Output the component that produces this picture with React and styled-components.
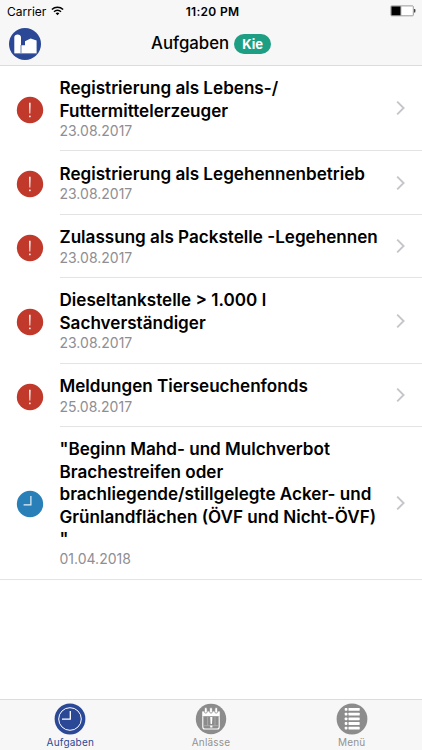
import styled, { createGlobalStyle } from "styled-components";

const tasks = [
  {
    title: ["Registrierung als Lebens-/", "Futtermittelerzeuger"],
    date: "23.08.2017",
    status: "overdue",
  },
  {
    title: ["Registrierung als Legehennenbetrieb"],
    date: "23.08.2017",
    status: "overdue",
  },
  {
    title: ["Zulassung als Packstelle -Legehennen"],
    date: "23.08.2017",
    status: "overdue",
  },
  {
    title: ["Dieseltankstelle > 1.000 l", "Sachverständiger"],
    date: "23.08.2017",
    status: "overdue",
  },
  {
    title: ["Meldungen Tierseuchenfonds"],
    date: "25.08.2017",
    status: "overdue",
  },
  {
    title: [
      '"Beginn Mahd- und Mulchverbot',
      "Brachestreifen oder",
      "brachliegende/stillgelegte Acker- und",
      "Grünlandflächen (ÖVF und Nicht-ÖVF)",
      '"',
    ],
    date: "01.04.2018",
    status: "upcoming",
  },
];

const tabs = [
  { label: "Aufgaben", Icon: ClockIcon, active: true },
  { label: "Anlässe", Icon: CalendarIcon },
  { label: "Menü", Icon: ListIcon },
];

const App = () => {
  return (
    <Screen>
      <GlobalStyle />
      <Header>
        <StatusBar>
          <Carrier>
            Carrier
            <WifiIcon />
          </Carrier>
          <Time>11:20 PM</Time>
          <Power>
            <BatteryIcon />
          </Power>
        </StatusBar>
        <NavBar>
          <FarmLogo />
          <NavTitle>Aufgaben</NavTitle>
          <Badge>Kie</Badge>
        </NavBar>
      </Header>

      <TaskList>
        {tasks.map((task) => (
          <TaskRow key={task.title[0]}>
            <StatusIcon status={task.status} />
            <TaskBody>
              <TaskText>
                {task.title.map((line) => (
                  <TaskTitle key={line}>{line}</TaskTitle>
                ))}
                <TaskDate>{task.date}</TaskDate>
              </TaskText>
              <Chevron />
            </TaskBody>
          </TaskRow>
        ))}
      </TaskList>

      <TabBar>
        {tabs.map(({ label, Icon, active }) => (
          <Tab key={label} $active={active}>
            <Icon />
            <TabLabel>{label}</TabLabel>
          </Tab>
        ))}
      </TabBar>
    </Screen>
  );
};
export default App;

function WifiIcon() {
  return (
    <svg width="13" height="10" viewBox="0 0 13 10" fill="none" stroke="#000">
      <path d="M0.9 3.5C4 0.5 9 0.5 12.1 3.5" strokeWidth="1.6" />
      <path d="M3 5.7C5 3.9 8 3.9 10 5.7" strokeWidth="1.5" />
      <path d="M4.6 7.3Q6.5 5.9 8.4 7.3L6.5 9.3Z" fill="#000" stroke="none" />
    </svg>
  );
}

function BatteryIcon() {
  return (
    <svg width="26" height="12" viewBox="0 0 26 12">
      <rect
        x="0.9"
        y="0.9"
        width="22.4"
        height="9.9"
        rx="0.8"
        fill="#fff"
        stroke="#999"
      />
      <rect x="1.4" y="1.4" width="9.3" height="8.9" fill="#000" />
      <rect x="10.7" y="1.4" width="0.6" height="8.9" fill="#888" />
      <path d="M24 4h1.2q0.6 1.8 0 3.6H24z" fill="#444" />
    </svg>
  );
}

function FarmLogo() {
  return (
    <svg width="32" height="32" viewBox="0 0 32 32">
      <circle cx="16" cy="16" r="16" fill="#2a4896" />
      <path
        d="M5.3 25.3V9.2Q5.5 6.4 8.6 6.4T12 9.2V17.3H16V13.3L21.6 10.4L27.6 12.6V25.3Z"
        fill="#fff"
      />
      <path d="M12 17v8.3" stroke="#2a4896" strokeWidth="0.7" />
      <path d="M5.3 25.6H27.6" stroke="#8fa0cc" strokeWidth="0.6" />
    </svg>
  );
}

function StatusIcon({ status }) {
  const overdue = status === "overdue";
  return (
    <StatusSvg viewBox="0 0 28 28">
      <circle cx="14" cy="14" r="13.2" fill={overdue ? "#c0392b" : "#2980b9"} />
      {overdue ? (
        <g fill="#fff">
          <path d="M13.1 6.8h1.5l-0.3 10.6h-0.9z" />
          <rect x="13.1" y="19.6" width="1.5" height="1.6" />
        </g>
      ) : (
        <path d="M14.9 6V14.8H7.6" fill="none" stroke="#e4f0f8" strokeWidth="1.2" />
      )}
    </StatusSvg>
  );
}

function Chevron() {
  return (
    <ChevronSvg viewBox="0 0 10 16">
      <path
        d="M1.2 1.6L7.6 8L1.2 14.4"
        fill="none"
        stroke="#c5c5ca"
        strokeWidth="1.9"
      />
    </ChevronSvg>
  );
}

function ClockIcon() {
  return (
    <svg width="32" height="32" viewBox="0 0 32 32">
      <circle cx="16" cy="16" r="15.4" fill="#2a4896" />
      <circle cx="16" cy="16" r="11.3" fill="none" stroke="#fff" strokeWidth="1" />
      <path d="M16.3 8V16.2H8" fill="none" stroke="#fff" strokeWidth="1.3" />
    </svg>
  );
}

function CalendarIcon() {
  return (
    <svg width="32" height="32" viewBox="0 0 32 32">
      <circle cx="16" cy="16" r="15.2" fill="#8c8c8c" />
      <path d="M7.2 8.4H24.8V13.2H7.2Z" fill="#fff" />
      <path
        d="M7.8 13.2V24Q7.8 26 9.8 26H22.2Q24.2 26 24.2 24V13.2"
        fill="none"
        stroke="#fff"
        strokeWidth="1.1"
      />
      <g fill="#fff" stroke="#8c8c8c" strokeWidth="0.8">
        <rect x="9.4" y="4.5" width="2.8" height="5.6" rx="1.4" />
        <rect x="14.6" y="4.5" width="2.8" height="5.6" rx="1.4" />
        <rect x="19.8" y="4.5" width="2.8" height="5.6" rx="1.4" />
      </g>
      <path
        d="M12.6 14V22.5M20 14V22.5M9 22.7H23"
        stroke="#bdbdbd"
        strokeWidth="0.6"
      />
      <path d="M15.2 14h2.2l-0.4 7h-1.4zM15.2 22.4h2.2v2.1h-2.2z" fill="#fff" />
    </svg>
  );
}

function ListIcon() {
  return (
    <svg width="32" height="32" viewBox="0 0 32 32">
      <circle cx="16" cy="16" r="15.4" fill="#8c8c8c" />
      <g fill="#fff">
        {[5, 9.7, 14.4, 19.1, 23.8].map((y) => (
          <g key={y}>
            <rect x="8.7" y={y} width="2.7" height="2.8" rx="0.8" />
            <rect x="12.5" y={y} width="11.2" height="2.8" rx="0.6" />
          </g>
        ))}
      </g>
    </svg>
  );
}

const GlobalStyle = createGlobalStyle`
  body {
    margin: 0;
    background-color: #fff;
  }
`;

const Screen = styled.div`
  width: 422px;
  height: 750px;

  display: flex;
  flex-direction: column;

  font-family: Inter, "Liberation Sans", sans-serif;
  color: #000;
  background-color: #fff;
`;

const Header = styled.header`
  height: 66px;
  box-sizing: border-box;

  border-bottom: 1px solid #dcdcdc;
  background-color: #f7f7f7;
`;

const StatusBar = styled.div`
  height: 22px;
  padding: 0 6px 0 7px;

  display: grid;
  grid-template-columns: 1fr auto 1fr;
  align-items: center;

  font-size: 12px;
`;

const Carrier = styled.span`
  display: flex;
  align-items: center;
  gap: 5px;
`;

const Time = styled.span`
  padding-left: 2px;
  font-weight: 600;
  letter-spacing: 0.3px;
`;

const Power = styled.span`
  display: flex;
  justify-content: flex-end;
`;

const NavBar = styled.div`
  height: 43px;
  padding: 0 9px;

  display: grid;
  grid-template-columns: 142px auto auto 1fr;
  align-items: center;
`;

const NavTitle = styled.h1`
  margin: 0 5px 1px 0;
  font-size: 16.8px;
  font-weight: 500;
`;

const Badge = styled.span`
  width: 37px;
  height: 20px;

  border-radius: 10px;

  font-size: 13px;
  font-weight: 700;
  line-height: 20px;
  text-align: center;

  color: #fff;
  background-color: #1e9e83;
`;

const TaskList = styled.ul`
  flex: 1;
  margin: -0.4px 0 0;
  padding: 0;
  list-style: none;
`;

const TaskBody = styled.div`
  flex: 1;
  padding: 11.5px 16px 10.9px 0;

  display: flex;
  align-items: center;
  justify-content: space-between;

  border-bottom: 1px solid #e3e3e5;
`;

const TaskRow = styled.li`
  display: flex;
  align-items: center;

  &:last-child {
    border-bottom: 1px solid #e3e3e5;
  }

  &:last-child ${TaskBody} {
    border-bottom: none;
  }
`;

const StatusSvg = styled.svg`
  width: 28px;
  height: 28px;
  margin: 2.6px 15.5px 0 16px;
  flex-shrink: 0;
`;

const ChevronSvg = styled.svg`
  width: 10px;
  height: 16px;
`;

const TaskText = styled.div`
  white-space: nowrap;
`;

const TaskTitle = styled.div`
  font-size: 17.1px;
  font-weight: 600;
  line-height: 22.4px;
`;

const TaskDate = styled.div`
  font-size: 14px;
  line-height: 17.5px;
  color: #8e8e93;
`;

const TabBar = styled.nav`
  height: 51px;
  box-sizing: border-box;

  display: grid;
  grid-template-columns: repeat(3, 1fr);

  border-top: 1px solid #dcdcdc;
  background-color: #f7f7f7;
`;

const Tab = styled.div`
  padding-top: 3px;

  display: flex;
  flex-direction: column;
  align-items: center;

  color: ${({ $active }) => ($active ? "#2a4896" : "#929292")};
`;

const TabLabel = styled.span`
  font-size: 10px;
  line-height: 14px;
  letter-spacing: 0.2px;
`;
